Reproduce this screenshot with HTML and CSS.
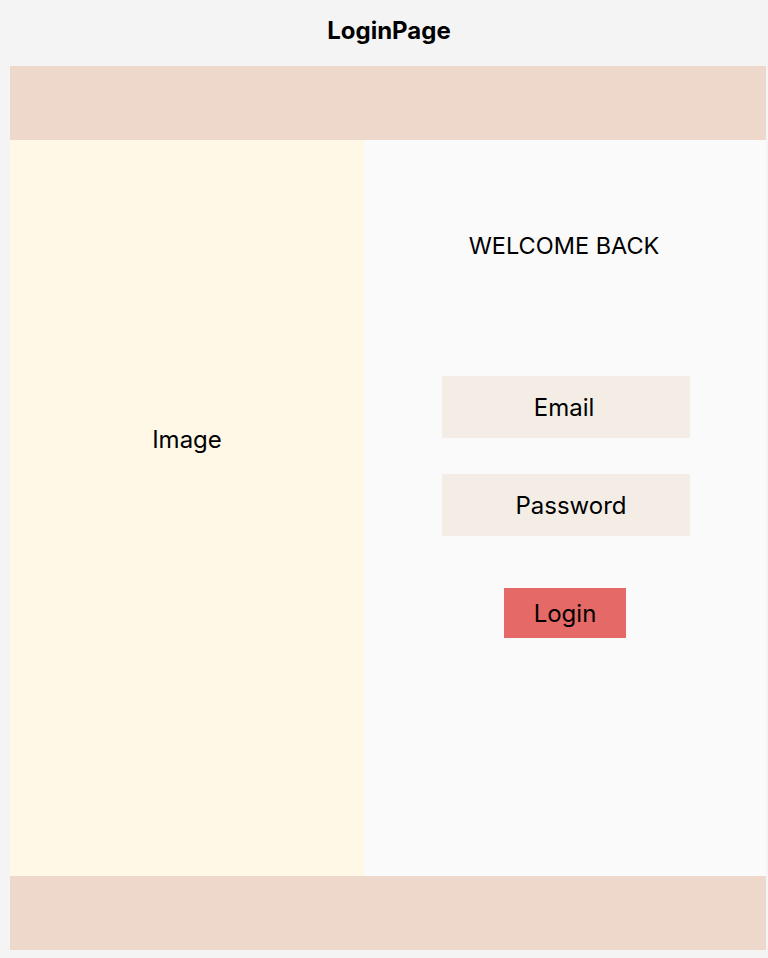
FILE: index.html
```html
<!DOCTYPE html>
<html>
<head>
<meta charset="utf-8">
<link rel="stylesheet" href="styles.css">
</head>
<body>
<div class="title">LoginPage</div>
<div class="frame">
  <div class="bar"></div>
  <div class="main">
    <div class="image-col"><span class="image-label">Image</span></div>
    <div class="form-col">
      <div class="welcome">WELCOME BACK</div>
      <div class="field field-email">Email</div>
      <div class="field field-pass">Password</div>
      <div class="btn">Login</div>
    </div>
  </div>
  <div class="bar"></div>
</div>
</body>
</html>
```
FILE: styles.css
```css
html, body {
  margin: 0;
  padding: 0;
  background: #f4f4f4;
}
body {
  font-family: Inter, "Noto Sans", sans-serif;
  color: #000;
  width: 768px;
  height: 958px;
  overflow: hidden;
}
.title {
  height: 66px;
  display: flex;
  justify-content: center;
  align-items: center;
  font-family: Inter, "Noto Sans", sans-serif;
  font-weight: 700;
  font-size: 24px;
  padding-bottom: 6px;
  padding-left: 10px;
  box-sizing: border-box;
}
.frame {
  margin-left: 10px;
  width: 756px;
}
.bar {
  height: 74px;
  background: #edd8cb;
}
.main {
  display: flex;
  height: 736px;
}
.image-col {
  width: 354px;
  background: #fff8e6;
  display: flex;
  justify-content: center;
  align-items: flex-start;
  padding-top: 285px;
  box-sizing: border-box;
}
.image-label {
  font-size: 24px;
  line-height: 30px;
}
.form-col {
  flex: 1;
  background: #fafafa;
  display: flex;
  flex-direction: column;
  align-items: center;
  justify-content: flex-start;
  padding-top: 91px;
  box-sizing: border-box;
}
.welcome {
  font-size: 23.5px;
  line-height: 30px;
  margin-bottom: 115px;
  margin-left: -2px;
}
.field {
  width: 248px;
  height: 62px;
  flex: none;
  background: #f4ede6;
  display: flex;
  justify-content: center;
  align-items: center;
  font-size: 24px;
  margin-bottom: 36px;
  margin-left: 2px;
  box-sizing: border-box;
}
.field-email {
  padding-right: 4px;
}
.field-pass {
  padding-left: 10px;
  margin-bottom: 52px;
}
.btn {
  width: 122px;
  height: 50px;
  flex: none;
  background: #e56966;
  display: flex;
  justify-content: center;
  align-items: center;
  font-size: 24px;
}
```
